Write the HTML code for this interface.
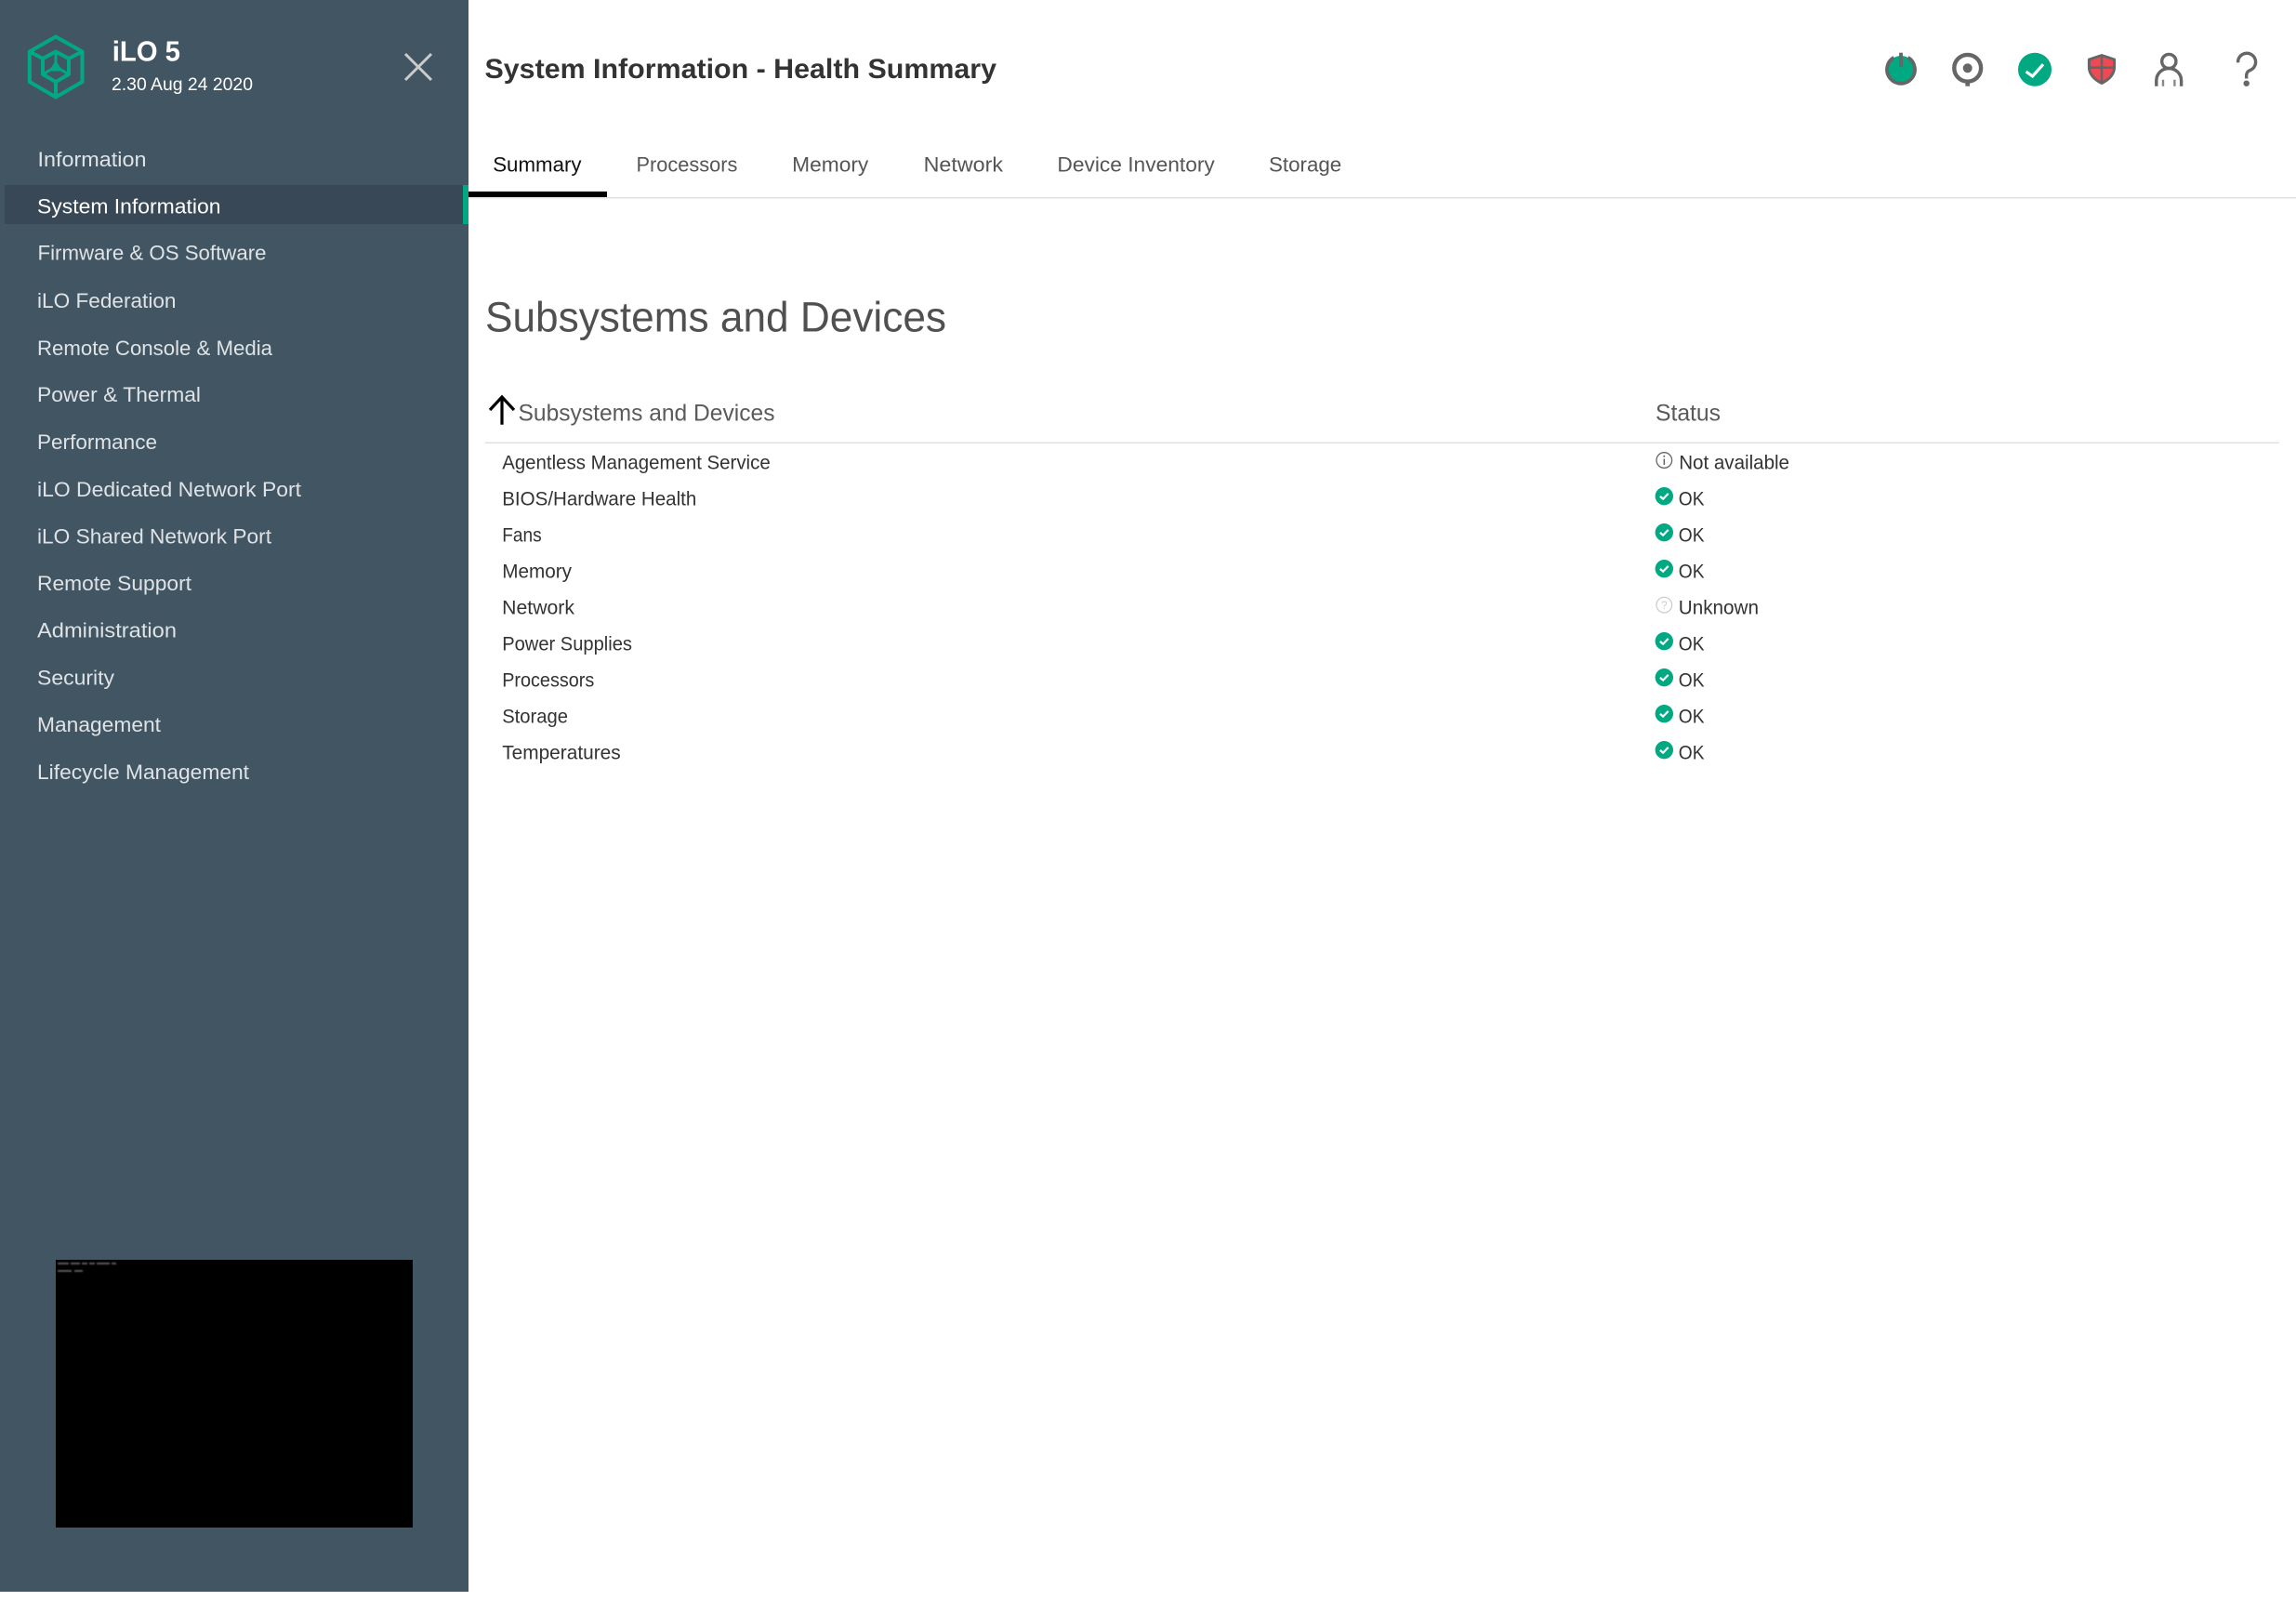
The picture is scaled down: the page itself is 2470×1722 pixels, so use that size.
<!DOCTYPE html>
<html lang="en">
<head>
<meta charset="utf-8">
<title>System Information - Health Summary</title>
<style>
html,body{margin:0;padding:0;background:#fff;width:2470px;height:1722px;overflow:hidden}
svg{display:block}
text{font-family:"Liberation Sans",Arial,sans-serif;white-space:pre}
.m{font-size:22px;fill:#dfe3e6}
.t{font-size:22.5px;fill:#555}
.r{font-size:21px;fill:#333}
.h{font-size:25px;fill:#5a5a5a}
</style>
</head>
<body>
<svg xmlns="http://www.w3.org/2000/svg" width="2470" height="1722" viewBox="0 0 2470 1722">
<defs>
  <g id="ok"><circle cx="0" cy="0" r="9.7" fill="#01a982"/><path d="M-4.4 0.2L-1.2 2.9L4.4-2.8" fill="none" stroke="#fff" stroke-width="2.200"/></g>
  <filter id="b" x="-10%" y="-200%" width="120%" height="500%"><feGaussianBlur stdDeviation="0.7"/></filter>
</defs>
<rect width="2470" height="1722" fill="#fff"/>

<!-- Sidebar -->
<rect x="0" y="0" width="504" height="1712" fill="#425563"/>
<rect x="5" y="199" width="493" height="42" fill="#394856"/>
<rect x="498" y="199" width="6" height="42" fill="#01a982"/>

<!-- Logo -->
<g fill="none" stroke="#01a982" stroke-width="4" stroke-linejoin="round">
  <path d="M60 39.500L88.500 55.500V88L60 104.500L31.800 88V55.500Z"/>
  <path d="M60 55.500L74 63V80L60 88L46 80V63Z"/>
  <path d="M31.800 55.500L46 63M88.500 55.500L74 63M60 104.500V88"/>
  <path d="M60 55.500V71.700L46 80M60 71.700L74 80" stroke-width="3"/>
</g>
<path d="M60 65L67.500 76.500H52.500Z" fill="#01a982"/>

<text x="120.700" y="65.700" font-size="31" font-weight="700" fill="#fff" textLength="73.300" lengthAdjust="spacingAndGlyphs">iLO 5</text>
<text x="120" y="97.200" font-size="19.500" fill="#fff" textLength="152" lengthAdjust="spacingAndGlyphs">2.30 Aug 24 2020</text>
<path d="M436 58L464 86M464 58L436 86" stroke="#ccc" stroke-width="3" fill="none"/>

<!-- Menu -->
<text class="m" x="40.500" y="179" textLength="117" lengthAdjust="spacingAndGlyphs">Information</text>
<text class="m" x="40" y="229.700" style="fill:#fff" textLength="197.500" lengthAdjust="spacingAndGlyphs">System Information</text>
<text class="m" x="40.500" y="279.700" textLength="246" lengthAdjust="spacingAndGlyphs">Firmware &amp; OS Software</text>
<text class="m" x="40" y="330.800" textLength="149.500" lengthAdjust="spacingAndGlyphs">iLO Federation</text>
<text class="m" x="40" y="381.800" textLength="253" lengthAdjust="spacingAndGlyphs">Remote Console &amp; Media</text>
<text class="m" x="40" y="432.200" textLength="176" lengthAdjust="spacingAndGlyphs">Power &amp; Thermal</text>
<text class="m" x="40" y="483" textLength="129" lengthAdjust="spacingAndGlyphs">Performance</text>
<text class="m" x="40" y="533.800" textLength="284" lengthAdjust="spacingAndGlyphs">iLO Dedicated Network Port</text>
<text class="m" x="40" y="584.300" textLength="252" lengthAdjust="spacingAndGlyphs">iLO Shared Network Port</text>
<text class="m" x="40" y="635" textLength="166" lengthAdjust="spacingAndGlyphs">Remote Support</text>
<text class="m" x="40" y="685.600" textLength="150" lengthAdjust="spacingAndGlyphs">Administration</text>
<text class="m" x="40" y="736.400" textLength="83" lengthAdjust="spacingAndGlyphs">Security</text>
<text class="m" x="40" y="787" textLength="133" lengthAdjust="spacingAndGlyphs">Management</text>
<text class="m" x="40" y="837.800" textLength="228" lengthAdjust="spacingAndGlyphs">Lifecycle Management</text>

<!-- Preview -->
<rect x="60" y="1355" width="384" height="288" fill="#000"/>
<g fill="#9a9a9a" opacity=".6" filter="url(#b)">
  <rect x="62" y="1358" width="12" height="2"/><rect x="76" y="1358" width="10" height="2"/><rect x="88" y="1358" width="6" height="2"/><rect x="96" y="1358" width="6" height="2"/><rect x="104" y="1358" width="14" height="2"/><rect x="120" y="1358" width="5" height="2"/>
  <rect x="62" y="1366" width="15" height="2"/><rect x="80" y="1366" width="9" height="2"/>
</g>

<!-- Title -->
<text x="521.500" y="84" font-size="30" font-weight="700" fill="#333" textLength="550.500" lengthAdjust="spacingAndGlyphs">System Information - Health Summary</text>

<!-- Header icons -->
<g fill="none" stroke="#666">
  <circle cx="2045" cy="75" r="15" fill="#01a982" stroke="none"/>
  <path d="M2037.500 61.800A15 15 0 1 0 2052.500 61.800" stroke-width="3.800"/>
  <path d="M2045 56.700V71.700" stroke-width="3.800"/>
  <circle cx="2116.700" cy="73.300" r="14.400" stroke-width="4.400"/>
  <path d="M2116.700 88V92.700" stroke-width="4.600"/>
</g>
<circle cx="2116.700" cy="73.300" r="5" fill="#666"/>
<circle cx="2189" cy="74.700" r="18" fill="#01a982"/>
<path d="M2179.600 77L2186.600 82L2198 69.200" fill="none" stroke="#fff" stroke-width="3.200"/>
<path d="M2261 59.500L2247.400 64V72C2247.400 80.500 2254 86 2261 89.500C2268 86 2274.600 80.500 2274.600 72V64Z" fill="#f04953" stroke="#666" stroke-width="3" stroke-linejoin="round"/>
<path d="M2261 60V89M2248 72.700H2274" stroke="#666" stroke-width="2.600" fill="none"/>
<g fill="none" stroke="#666" stroke-width="3.400">
  <circle cx="2333.300" cy="66" r="7.600"/>
  <path d="M2319.800 92.700V86.500A13.400 13 0 0 1 2346.600 86.500V92.700"/>
  <path d="M2327 85.700V92.700M2339.400 85.700V92.700" stroke-width="2.400" stroke="#888"/>
  <path d="M2407.600 67.300A9.500 9.500 0 1 1 2420.800 75.500Q2416.700 77 2416.700 81V84.500"/>
</g>
<circle cx="2416.700" cy="89.700" r="3.200" fill="#666"/>

<!-- Tabs -->
<rect x="504" y="212" width="1966" height="1.500" fill="#e0e0e0"/>
<rect x="504" y="206" width="149" height="6" fill="#000"/>
<text class="t" x="530.200" y="184.600" style="fill:#111" textLength="95.400" lengthAdjust="spacingAndGlyphs">Summary</text>
<text class="t" x="684.500" y="184.600" textLength="108.900" lengthAdjust="spacingAndGlyphs">Processors</text>
<text class="t" x="852.200" y="184.600" textLength="82.100" lengthAdjust="spacingAndGlyphs">Memory</text>
<text class="t" x="993.600" y="184.600" textLength="85.400" lengthAdjust="spacingAndGlyphs">Network</text>
<text class="t" x="1137.400" y="184.600" textLength="169.400" lengthAdjust="spacingAndGlyphs">Device Inventory</text>
<text class="t" x="1365" y="184.600" textLength="78.200" lengthAdjust="spacingAndGlyphs">Storage</text>

<!-- Heading -->
<text x="522" y="356.700" font-size="45" fill="#505050" textLength="496" lengthAdjust="spacingAndGlyphs">Subsystems and Devices</text>

<!-- Table header -->
<path d="M540 456.700V427M527 441L540 427L553 441" fill="none" stroke="#000" stroke-width="3.200"/>
<text class="h" x="557.500" y="452.700" textLength="276" lengthAdjust="spacingAndGlyphs">Subsystems and Devices</text>
<text class="h" x="1781" y="452.700" textLength="70" lengthAdjust="spacingAndGlyphs">Status</text>
<rect x="522" y="475.500" width="1930" height="1.500" fill="#e0e0e0"/>

<!-- Rows -->
<text class="r" x="540.200" y="504.500" textLength="288.500" lengthAdjust="spacingAndGlyphs">Agentless Management Service</text>
<text class="r" x="540.200" y="543.500" textLength="209.100" lengthAdjust="spacingAndGlyphs">BIOS/Hardware Health</text>
<text class="r" x="540.200" y="582.500" textLength="42.500" lengthAdjust="spacingAndGlyphs">Fans</text>
<text class="r" x="540.200" y="621.500" textLength="74.800" lengthAdjust="spacingAndGlyphs">Memory</text>
<text class="r" x="540.200" y="660.500" textLength="77.800" lengthAdjust="spacingAndGlyphs">Network</text>
<text class="r" x="540.200" y="699.500" textLength="139.800" lengthAdjust="spacingAndGlyphs">Power Supplies</text>
<text class="r" x="540.200" y="738.500" textLength="99.100" lengthAdjust="spacingAndGlyphs">Processors</text>
<text class="r" x="540.200" y="777.500" textLength="70.800" lengthAdjust="spacingAndGlyphs">Storage</text>
<text class="r" x="540.200" y="816.500" textLength="127.500" lengthAdjust="spacingAndGlyphs">Temperatures</text>

<!-- Status -->
<circle cx="1790.300" cy="495" r="8.300" fill="none" stroke="#666" stroke-width="1.300"/>
<path d="M1790.300 493.500V500" stroke="#666" stroke-width="1.500"/>
<circle cx="1790.300" cy="490.800" r="1" fill="#666"/>
<text class="r" x="1806.200" y="504.500" textLength="118.800" lengthAdjust="spacingAndGlyphs">Not available</text>

<use href="#ok" x="1790.300" y="533.700"/>
<text class="r" x="1805.800" y="543.500" textLength="27.700" lengthAdjust="spacingAndGlyphs">OK</text>
<use href="#ok" x="1790.300" y="572.700"/>
<text class="r" x="1805.800" y="582.500" textLength="27.700" lengthAdjust="spacingAndGlyphs">OK</text>
<use href="#ok" x="1790.300" y="611.700"/>
<text class="r" x="1805.800" y="621.500" textLength="27.700" lengthAdjust="spacingAndGlyphs">OK</text>

<circle cx="1790.300" cy="650.700" r="8.300" fill="none" stroke="#ccc" stroke-width="1.300"/>
<text x="1790.300" y="655" font-size="12" fill="#ccc" text-anchor="middle">?</text>
<text class="r" x="1805.800" y="660.500" textLength="86.200" lengthAdjust="spacingAndGlyphs">Unknown</text>

<use href="#ok" x="1790.300" y="689.700"/>
<text class="r" x="1805.800" y="699.500" textLength="27.700" lengthAdjust="spacingAndGlyphs">OK</text>
<use href="#ok" x="1790.300" y="728.700"/>
<text class="r" x="1805.800" y="738.500" textLength="27.700" lengthAdjust="spacingAndGlyphs">OK</text>
<use href="#ok" x="1790.300" y="767.700"/>
<text class="r" x="1805.800" y="777.500" textLength="27.700" lengthAdjust="spacingAndGlyphs">OK</text>
<use href="#ok" x="1790.300" y="806.700"/>
<text class="r" x="1805.800" y="816.500" textLength="27.700" lengthAdjust="spacingAndGlyphs">OK</text>
</svg>
</body>
</html>
